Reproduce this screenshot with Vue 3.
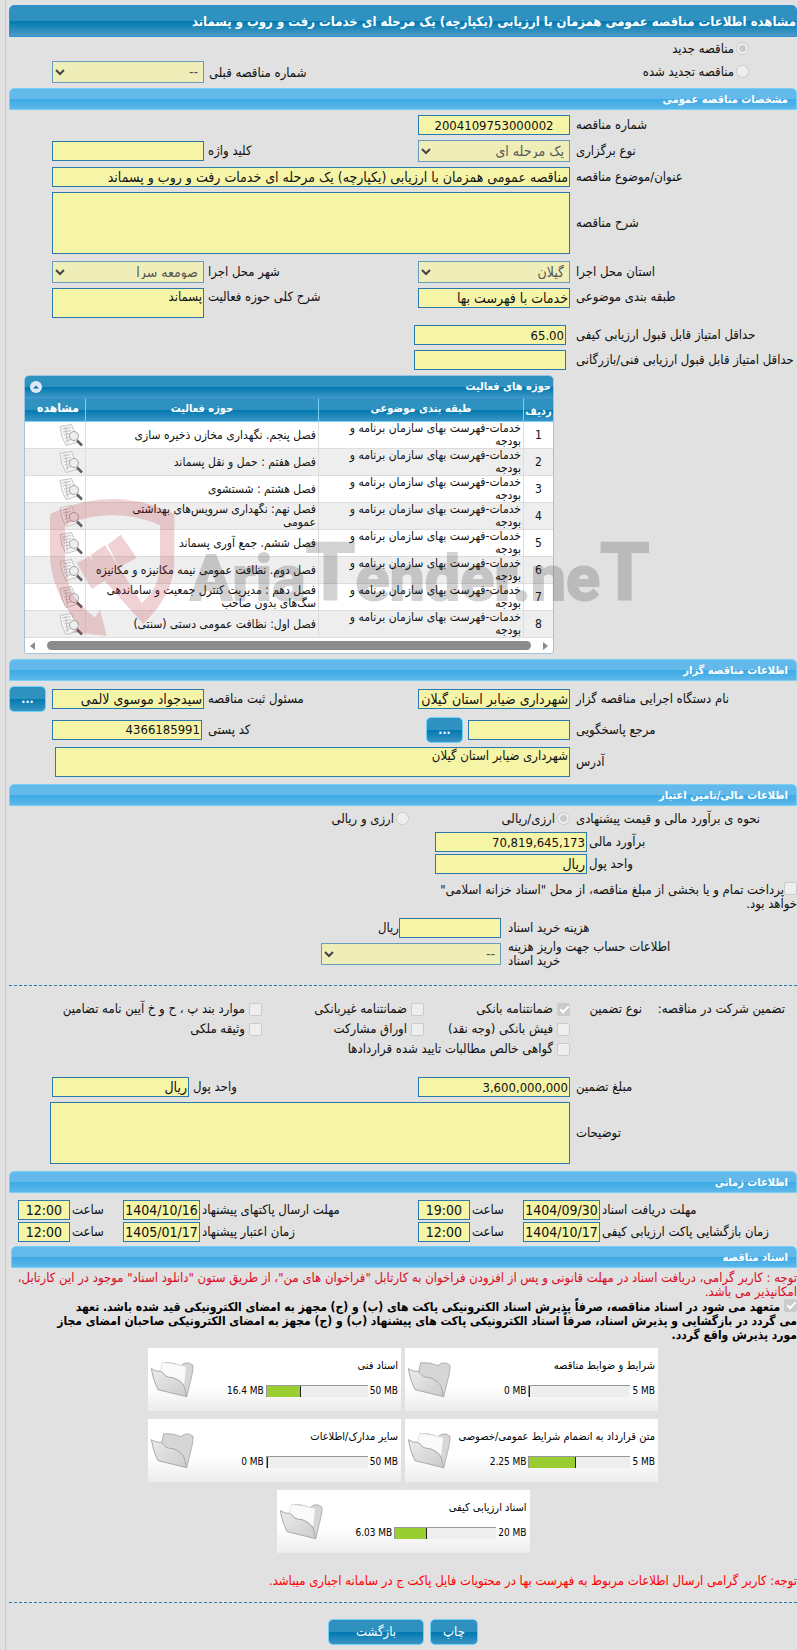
<script setup>
const activities = [
  'فصل پنجم. نگهداری مخازن ذخیره سازی',
  'فصل هفتم : حمل و نقل پسماند',
  'فصل هشتم : شستشوی',
  'فصل نهم: نگهداری سرویس‌های بهداشتی\nعمومی',
  'فصل ششم. جمع آوری پسماند',
  'فصل دوم. نظافت عمومی نیمه مکانیزه و مکانیزه',
  'فصل دهم : مدیریت کنترل جمعیت و ساماندهی\nسگ‌های بدون صاحب',
  'فصل اول: نظافت عمومی دستی (سنتی)'
]
const category = 'خدمات-فهرست بهای سازمان برنامه و\nبودجه'

const dates = [
  { id: 'receive', label: 'مهلت دریافت اسناد', date: '1404/09/30', hour: '19:00' },
  { id: 'send', label: 'مهلت ارسال پاکتهای پیشنهاد', date: '1404/10/16', hour: '12:00' },
  { id: 'open', label: 'زمان بازگشایی پاکت ارزیابی کیفی', date: '1404/10/17', hour: '12:00' },
  { id: 'valid', label: 'زمان اعتبار پیشنهاد', date: '1405/01/17', hour: '12:00' }
]

const documents = [
  { name: 'شرایط و ضوابط مناقصه', used: '0 MB', max: '5 MB', percent: 0 },
  { name: 'اسناد فنی', used: '16.4 MB', max: '50 MB', percent: 33 },
  { name: 'متن قرارداد به انضمام شرایط عمومی/خصوصی', used: '2.25 MB', max: '5 MB', percent: 45 },
  { name: 'سایر مدارک/اطلاعات', used: '0 MB', max: '50 MB', percent: 0 },
  { name: 'اسناد ارزیابی کیفی', used: '6.03 MB', max: '20 MB', percent: 30 }
]
</script>

<template>
  <div class="page" dir="rtl" lang="fa">
    <main class="content">
      <h1 class="title">مشاهده اطلاعات مناقصه عمومی همزمان با ارزیابی (یکپارچه) یک مرحله ای خدمات رفت و روب و پسماند</h1>

      <div class="kind">
        <div class="kind-options">
          <label class="option"><input type="radio" name="kind" checked disabled><span>مناقصه جدید</span></label>
          <label class="option"><input type="radio" name="kind" disabled><span>مناقصه تجدید شده</span></label>
        </div>
        <label class="lbl lbl-prev" for="prev">شماره مناقصه قبلی</label>
        <div class="select">
          <select id="prev" disabled><option>--</option></select>
          <svg viewBox="0 0 10 7"><path d="M1 1l4 4 4-4" /></svg>
        </div>
      </div>

      <h2 class="section">مشخصات مناقصه عمومی</h2>
      <div class="form general">
        <div class="row">
          <label class="lbl" for="number">شماره مناقصه</label>
          <input id="number" class="center digits" type="text" value="2004109753000002" readonly>
        </div>
        <div class="row">
          <label class="lbl" for="type">نوع برگزاری</label>
          <div class="select">
            <select id="type" disabled><option>یک مرحله ای</option></select>
            <svg viewBox="0 0 10 7"><path d="M1 1l4 4 4-4" /></svg>
          </div>
          <label class="lbl lbl2" for="keyword">کلید واژه</label>
          <input id="keyword" type="text" readonly>
        </div>
        <div class="row">
          <label class="lbl" for="subject">عنوان/موضوع مناقصه</label>
          <input id="subject" class="wide" type="text" value="مناقصه عمومی همزمان با ارزیابی (یکپارچه) یک مرحله ای خدمات رفت و روب و پسماند" readonly>
        </div>
        <div class="row">
          <label class="lbl" for="desc">شرح مناقصه</label>
          <textarea id="desc" class="wide tall" readonly></textarea>
        </div>
        <div class="row spaced">
          <label class="lbl" for="province">استان محل اجرا</label>
          <div class="select">
            <select id="province" disabled><option>گیلان</option></select>
            <svg viewBox="0 0 10 7"><path d="M1 1l4 4 4-4" /></svg>
          </div>
          <label class="lbl lbl2" for="city">شهر محل اجرا</label>
          <div class="select">
            <select id="city" disabled><option>صومعه سرا</option></select>
            <svg viewBox="0 0 10 7"><path d="M1 1l4 4 4-4" /></svg>
          </div>
        </div>
        <div class="row top">
          <label class="lbl" for="class">طبقه بندی موضوعی</label>
          <input id="class" type="text" value="خدمات با فهرست بها" readonly>
          <label class="lbl lbl2" for="scope">شرح کلی حوزه فعالیت</label>
          <textarea id="scope" class="short" readonly>پسماند</textarea>
        </div>
        <div class="row spaced">
          <label class="lbl" for="minq">حداقل امتیاز قابل قبول ارزیابی کیفی</label>
          <input id="minq" class="inset digits" type="text" value="65.00" readonly>
        </div>
        <div class="row">
          <label class="lbl" for="mint">حداقل امتیاز قابل قبول ارزیابی فنی/بازرگانی</label>
          <input id="mint" class="inset" type="text" readonly>
        </div>
      </div>

      <div class="board">
        <section class="grid-panel">
          <header class="grid-head">
            <h3>حوزه های فعالیت</h3>
            <button type="button" class="collapse" aria-label="جمع کردن">
              <svg viewBox="0 0 12 12"><circle cx="6" cy="6" r="6" fill="#dce9f7" /><path d="M3 7.5L6 4.5l3 3z" fill="#0b6fa8" /></svg>
            </button>
          </header>
          <table>
            <colgroup><col class="c1"><col class="c2"><col><col class="c4"></colgroup>
            <thead>
              <tr><th class="low">ردیف</th><th>طبقه بندی موضوعی</th><th>حوزه فعالیت</th><th>مشاهده</th></tr>
            </thead>
            <tbody>
              <tr v-for="(a, i) in activities" :key="i">
                <td class="num">{{ i + 1 }}</td>
                <td>{{ category }}</td>
                <td>{{ a }}</td>
                <td class="view">
                  <svg viewBox="0 0 24 23">
                    <path d="M1 2.5L12.500 .5q1 5 6 11.500L19 18 7 21.500Q2 14 1 2.500z" fill="#f6f6f6" stroke="#c4c4c4" />
                    <path d="M3.500 5l8-1.500M4 8l8-1.500M5 11l6-1.500M6 14l4-1M7 17l5-1.500M6.500 3l2 16" fill="none" stroke="#c0c0c0" />
                    <circle cx="15" cy="12" r="4.500" fill="#eeeeee" stroke="#a5a5a5" />
                    <path d="M18 16.500l5 5" stroke="#5f5f5f" stroke-width="2.500" />
                  </svg>
                </td>
              </tr>
            </tbody>
          </table>
          <div class="scroll" dir="ltr"><i class="arrow left"></i><i class="thumb"></i><i class="arrow right"></i></div>
        </section>
        <svg class="mark" viewBox="0 0 620 155" direction="ltr" aria-hidden="true">
          <g transform="scale(.3333)" fill="#b9232e">
            <path fill-rule="evenodd" d="M30 75Q218-15 403 75V215C403 290 365 350 310 405L194 275 155 300 110 222 148 202 159 218 153 197 195 168 306 343C345 305 360 270 360 220V108Q218 48 75 108V200C75 290 100 335 165 385L180 363 200 440 95 430 120 412C55 335 30 260 30 190z" />
            <path d="M203 167L242 137 290 207 237 235z" />
          </g>
          <text x="150" y="111" fill="#222" stroke="#222" stroke-width="2">Aria<tspan class="big">T</tspan>ender.ne<tspan class="big">T</tspan></text>
        </svg>
      </div>

      <h2 class="section">اطلاعات مناقصه گزار</h2>
      <div class="form owner">
        <div class="row">
          <label class="lbl" for="agency">نام دستگاه اجرایی مناقصه گزار</label>
          <input id="agency" type="text" value="شهرداری ضیابر استان گیلان" readonly>
          <label class="lbl lbl2" for="agent">مسئول ثبت مناقصه</label>
          <input id="agent" type="text" value="سیدجواد موسوی لالمی" readonly>
          <button type="button" class="btn more">...</button>
        </div>
        <div class="row">
          <label class="lbl" for="ref">مرجع پاسخگویی</label>
          <div class="with-btn"><input id="ref" type="text" readonly><button type="button" class="btn more">...</button></div>
          <label class="lbl lbl2" for="postal">کد پستی</label>
          <input id="postal" class="slim digits" type="text" value="4366185991" readonly>
        </div>
        <div class="row">
          <label class="lbl" for="address">آدرس</label>
          <textarea id="address" class="wide short" readonly>شهرداری ضیابر استان گیلان</textarea>
        </div>
      </div>

      <h2 class="section">اطلاعات مالی/تامین اعتبار</h2>
      <div class="form finance">
        <div class="row">
          <span class="lbl">نحوه ی برآورد مالی و قیمت پیشنهادی</span>
          <label class="option"><input type="radio" name="cur" checked disabled><span>ارزی/ریالی</span></label>
          <label class="option"><input type="radio" name="cur" disabled><span>ارزی و ریالی</span></label>
        </div>
        <div class="money">
          <label class="lbl" for="estimate">برآورد مالی</label>
          <input id="estimate" class="digits" type="text" value="70,819,645,173" readonly>
          <label class="lbl" for="unit1">واحد پول</label>
          <input id="unit1" type="text" value="ریال" readonly>
        </div>
        <label class="treasury"><input type="checkbox" disabled>پرداخت تمام و یا بخشی از مبلغ مناقصه، از محل "اسناد خزانه اسلامی" خواهد بود.</label>
        <div class="buy">
          <label class="buy-label" for="cost">هزینه خرید اسناد</label>
          <div class="cost"><input id="cost" type="text" readonly><span>ریال</span></div>
          <label class="buy-label" for="account">اطلاعات حساب جهت واریز هزینه خرید اسناد</label>
          <div class="select account">
            <select id="account" disabled><option>--</option></select>
            <svg viewBox="0 0 10 7"><path d="M1 1l4 4 4-4" /></svg>
          </div>
        </div>
      </div>

      <hr>
      <div class="guarantee">
        <span class="g-title">تضمین شرکت در مناقصه:</span>
        <span class="g-kind">نوع تضمین</span>
        <div class="checks">
          <label class="check"><input type="checkbox" checked disabled>ضمانتنامه بانکی</label>
          <label class="check"><input type="checkbox" disabled>ضمانتنامه غیربانکی</label>
          <label class="check"><input type="checkbox" disabled>موارد بند پ ، ح و خ آیین نامه تضامین</label>
          <label class="check"><input type="checkbox" disabled>فیش بانکی (وجه نقد)</label>
          <label class="check"><input type="checkbox" disabled>اوراق مشارکت</label>
          <label class="check"><input type="checkbox" disabled>وثیقه ملکی</label>
          <label class="check all"><input type="checkbox" disabled>گواهی خالص مطالبات تایید شده قراردادها</label>
        </div>
      </div>
      <div class="form amount">
        <div class="row">
          <label class="lbl" for="amount">مبلغ تضمین</label>
          <input id="amount" class="digits" type="text" value="3,600,000,000" readonly>
          <label class="lbl unit-label" for="unit2">واحد پول</label>
          <input id="unit2" class="unit" type="text" value="ریال" readonly>
        </div>
        <div class="row">
          <label class="lbl" for="notes">توضیحات</label>
          <textarea id="notes" class="wide tall" readonly></textarea>
        </div>
      </div>

      <h2 class="section">اطلاعات زمانی</h2>
      <div class="times">
        <div v-for="d in dates" :key="d.id" class="time">
          <label :for="d.id">{{ d.label }}</label>
          <input :id="d.id" class="date" type="text" :value="d.date" readonly>
          <label class="hour-label" :for="d.id + '-h'">ساعت</label>
          <input :id="d.id + '-h'" class="hour" type="text" :value="d.hour" readonly>
        </div>
      </div>

      <h2 class="section docs">اسناد مناقصه</h2>
      <p class="notice">توجه : کاربر گرامی، دریافت اسناد در مهلت قانونی و پس از افزودن فراخوان به کارتابل "فراخوان های من"، از طریق ستون "دانلود اسناد" موجود در این کارتابل، امکانپذیر می باشد.</p>
      <label class="pledge"><input type="checkbox" checked disabled> متعهد می شود در اسناد مناقصه، صرفاً پذیرش اسناد الکترونیکی پاکت های (ب) و (ج) مجهز به امضای الکترونیکی قید شده باشد. تعهد<br>می گردد در بازگشایی و پذیرش اسناد، صرفاً اسناد الکترونیکی پاکت های پیشنهاد (ب) و (ج) مجهز به امضای الکترونیکی صاحبان امضای مجاز<br>مورد پذیرش واقع گردد.</label>

      <div class="cards">
        <article v-for="d in documents" :key="d.name" class="card">
          <div class="info">
            <h3>{{ d.name }}</h3>
            <div class="usage">
              <span class="max" dir="ltr">{{ d.max }}</span>
              <span class="bar" dir="ltr"><i :style="{ width: d.percent + '%' }"></i></span>
              <span dir="ltr">{{ d.used }}</span>
            </div>
          </div>
          <svg class="folder" viewBox="21 263 132 114">
            <defs>
              <linearGradient id="fold" x1="0" y1="0" x2="1" y2="1"><stop offset="0" stop-color="#ececec" /><stop offset="1" stop-color="#cbcbcb" /></linearGradient>
            </defs>
            <path d="M62 268Q90 266 114 277L124 270Q140 265 150 276Q151 290 142 325L131 370L55 330Q52 300 62 268z" fill="#d6d6d6" stroke="#b0b0b0" stroke-width="3" />
            <path v-if="d.percent" d="M58 267Q95 270 130 280L124 335Q112 320 90 313Q75 313 67 307Q60 296 52 294z" fill="#fafafa" stroke="#dadada" stroke-width="2" />
            <path d="M25 286Q40 296 52 294Q60 296 67 307Q75 313 90 313Q115 322 124 340L131 370L45 349Q30 320 25 286z" fill="url(#fold)" stroke="#a9a9a9" stroke-width="3" />
          </svg>
        </article>
      </div>

      <p class="warn">توجه: کاربر گرامی ارسال اطلاعات مربوط به فهرست بها در محتویات فایل پاکت ج در سامانه اجباری میباشد.</p>
      <hr>
      <div class="actions">
        <button type="button" class="btn print">چاپ</button>
        <button type="button" class="btn back">بازگشت</button>
      </div>
    </main>
  </div>
</template>

<style>
body { background: #e1e1e1; }
</style>

<style scoped>
* { box-sizing: border-box; }
.page {
  padding-left: 5px;
  background: #e1e1e1;
  color: #111;
  font-family: "DejaVu Sans Condensed", "DejaVu Sans", Tahoma, sans-serif;
  font-size: 13px;
  line-height: 14px;
  overflow: hidden;
}
.content { border-left: 1px solid #c8c8c8; padding: 5px 0 27px 3px; }
h1, h2, h3, p { margin: 0; }
.title {
  height: 32px;
  border: 1px solid #2f8fd8;
  border-radius: 5px 5px 0 0;
  background: linear-gradient(#2e91c0 0 50%, #0078b0 50%, #4a9cc5);
  color: #fff;
  font-size: 13px;
  line-height: 32px;
  white-space: nowrap;
}
.section {
  height: 22px;
  border: 1px solid #77cff5;
  border-radius: 5px 5px 0 0;
  background: linear-gradient(#63b9e9 0 50%, #3ca8e4 50%, #5cb8ea);
  color: #fff;
  font-size: 11px;
  line-height: 22px;
  padding-right: 8px;
}
input, textarea, select, button { font: inherit; margin: 0; border-radius: 0; }
input[type="text"], textarea, select {
  width: 100%;
  border: 1px solid #2a7aab;
  background: #f6f4a6;
  color: #111;
  padding: 0 1px;
  outline: 0;
  font-size: 14px;
}
input[type="text"] { height: 20px; }
input.digits[type="text"] { font-size: 13px; }
textarea { display: block; height: 30px; resize: none; line-height: 16px; overflow: hidden; }
textarea.short { font-size: 13px; }
textarea.tall { height: 62px; }
.select { position: relative; }
select { display: block; appearance: none; height: 22px; padding: 0 5px; background: #f0eeb8; border-color: #659bbd; color: #555; opacity: 1; }
.select svg { position: absolute; left: 3px; top: 8px; width: 10px; height: 7px; fill: none; stroke: #444; stroke-width: 2; }
input[type="radio"], input[type="checkbox"] {
  appearance: none;
  flex: none;
  width: 13px;
  height: 13px;
  border: 1px solid #cbcbcb;
  background: #eee;
}
input[type="radio"] { border-radius: 50%; }
input[type="radio"]:checked { background: radial-gradient(circle, #cbcbcb 0 3px, #eee 4px); }
input[type="checkbox"] { border-radius: 2px; }
input[type="checkbox"]:checked { position: relative; background: #cbcbcb; }
input[type="checkbox"]:checked::after {
  content: "";
  position: absolute;
  left: 4px;
  top: 0;
  width: 3px;
  height: 7px;
  border: solid #fff;
  border-width: 0 2px 2px 0;
  transform: rotate(45deg);
}
.option { display: flex; align-items: center; gap: 2px; white-space: nowrap; }
.lbl { padding-left: 6px; text-align: left; white-space: nowrap; }
.lbl2 { padding-left: 4px; }
.row, .kind {
  display: grid;
  grid-template-columns: 227fr 152px 214fr 152px 43px;
  align-items: center;
}
.kind { padding: 3px 0 5px; }
.kind-options { grid-column: 1 / 3; padding: 0 48px 3px 0; display: grid; gap: 6px; }
.kind-options .option { height: 17px; }
.kind .select, .kind .lbl { align-self: end; }
.kind .lbl { padding: 0 0 3px 5px; }
.form { display: grid; }
.general { gap: 5px; padding: 5px 0; }
.wide { grid-column: 2 / 5; }
.center { text-align: center; }
.spaced { margin-top: 2px; }
.top { align-items: start; }
.top .lbl { padding-top: 2px; }
.inset { position: relative; right: 4px; }

.board { position: relative; padding: 0 0 5px 15px; }
.grid-panel { width: 530px; max-width: 100%; margin-right: auto; border: 1px solid #9fc4e2; border-radius: 5px 5px 3px 3px; background: #fff; overflow: hidden; }
.grid-head { height: 22px; display: flex; align-items: center; justify-content: space-between; padding: 0 2px 0 5px; background: linear-gradient(#2e91c0 0 50%, #0078b0 50%, #3f97c5); color: #fff; }
.grid-head h3 { font-size: 11px; line-height: 22px; }
.collapse { display: flex; padding: 0; border: 0; background: none; }
.collapse svg { width: 12px; height: 12px; }
table { width: 100%; border-collapse: separate; border-spacing: 0; table-layout: fixed; font-size: 12px; line-height: 13px; }
.c1 { width: 30px; }
.c2 { width: 205px; }
.c4 { width: 60px; }
th { height: 24px; padding: 0 2px 4px; border-top: 1px solid #3d93d3; border-bottom: 1px solid #77cff5; border-left: 1px solid #77cff5; background: linear-gradient(#2e91c0 0 50%, #0078b0 50%, #3a95c4); color: #fff; font-size: 11px; white-space: nowrap; }
th.low { padding: 2px 0 0; }
th:last-child { padding-right: 0; padding-left: 6px; font-size: 12px; }
th:last-child, td:last-child { border-left: 0; }
td { height: 27px; padding: 0 2px; border-bottom: 1px solid #ddd; border-left: 1px solid #ddd; overflow: hidden; text-align: right; white-space: pre-line; }
tbody tr:nth-child(even) { background: #eee; }
td.num { text-align: center; }
td.view { padding: 0 2px 0 0; }
.view svg { display: block; width: 24px; height: 23px; }
.scroll { height: 15px; display: flex; align-items: center; justify-content: space-between; gap: 12px; padding: 0 5px; }
.thumb { flex: 1; height: 9px; border-radius: 5px; background: #8b8b8b; }
.arrow { border: 4px solid transparent; }
.arrow.left { border-right: 5px solid #8b8b8b; border-left: 0; }
.arrow.right { border-left: 5px solid #8b8b8b; border-right: 0; }
.mark { position: absolute; left: 31px; top: 114px; width: 620px; height: 155px; opacity: .2; pointer-events: none; }
.mark text { font: bold 63px Roboto, sans-serif; }
.mark .big { font-size: 80px; }

.owner { padding: 5px 0 7px; }
.btn {
  height: 26px;
  border: 1px solid #70d0f5;
  border-radius: 5px;
  background: linear-gradient(#2e91c0 0 50%, #0078b0 50%, #3a95c4);
  color: #fff;
  padding: 0;
}
.more { width: 37px; font-size: 12px; font-weight: bold; }
.row > .more { justify-self: end; }
.owner .row:nth-child(2) { height: 35px; }
.with-btn { display: flex; gap: 5px; }
.with-btn input { width: 102px; align-self: center; }
.slim { width: 150px !important; justify-self: end; }
.owner textarea { justify-self: start; width: calc(100% - 3px); }

.finance { padding: 4px 0 17px; }
.finance .row { height: 17px; grid-template-columns: 227fr 161px 400fr; margin-bottom: 5px; }
.money { display: grid; grid-template-columns: 210fr 152px 426fr; row-gap: 2px; align-items: center; }
.money .lbl { padding-left: 2px; grid-column: 1; }
.treasury { width: 386px; margin: 8px 0 7px; }
.treasury input { vertical-align: -1px; }
.buy { display: grid; grid-template-columns: 182px 480px; padding-right: 107px; row-gap: 2px; align-items: center; }
.buy-label { width: 182px; text-align: left; }
.cost { display: flex; align-items: center; padding-right: 7px; }
.cost input { width: 102px; }
.account { width: 180px; margin-right: 7px; }
hr { border: 0; border-top: 1px dashed #2a7aab; margin: 0; }

.guarantee { display: flex; padding: 13px 12px 0 0; line-height: 20px; white-space: nowrap; }
.g-title { width: 143px; }
.g-kind { width: 72px; }
.checks { display: grid; grid-template-columns: 146px 162px auto; }
.check { display: flex; align-items: center; gap: 4px; height: 20px; }
.all { grid-column: 1 / 3; }
.amount { gap: 5px; padding: 18px 0 7px; }
.unit-label { padding-left: 4px; }
.amount .row:first-child { grid-template-columns: 227fr 152px 229fr 137px 43px; }
.amount textarea { justify-self: start; width: calc(100% + 2px); }

.times { display: grid; grid-template-columns: 379fr 409fr; row-gap: 2px; padding: 7px 0 4px; }
.time { display: flex; align-items: center; justify-content: flex-end; gap: 2px; white-space: nowrap; }
.time:nth-child(even) { padding-left: 9px; }
.time .date { width: 77px; text-align: center; }
.time .hour { width: 52px; text-align: center; }
.hour-label { width: 49px; text-align: left; }

.docs { margin-left: 2px; }
.notice { color: #dc0a1e; padding: 3px 0 0; }
.pledge { display: block; font-size: 12px; font-weight: bold; color: #000; padding: 0 0 5px; white-space: nowrap; }
.pledge input { vertical-align: -1px; }

.cards { display: flex; flex-wrap: wrap; justify-content: center; gap: 8px 4px; width: 520px; max-width: 100%; margin: 0 auto; padding-top: 1px; }
.card { width: 253px; height: 63px; display: flex; justify-content: space-between; background: linear-gradient(#fff 60%, #ececec); padding: 0 3px 0 2px; color: #000; font-size: 10px; }
.info { width: 202px; }
.card h3 { font-size: 11px; font-weight: normal; line-height: 14px; padding-top: 11px; white-space: nowrap; }
.usage { display: flex; align-items: center; gap: 2px; margin-top: 11px; line-height: 14px; white-space: nowrap; }
.bar { width: 102px; height: 12px; background: #eee; border-top: 1px solid #999; border-left: 1px solid #999; display: block; }
.bar i { display: block; box-sizing: content-box; height: 11px; background: #9acd32; border-right: 1px solid #222; }
.folder { width: 44px; height: 38px; margin-top: 13px; flex: none; }

.warn { color: #f00; padding: 21px 0 14px; }
.actions { display: flex; justify-content: center; gap: 6px; padding: 16px 0 0; }
.print { width: 48px; }
.back { width: 96px; }
</style>
